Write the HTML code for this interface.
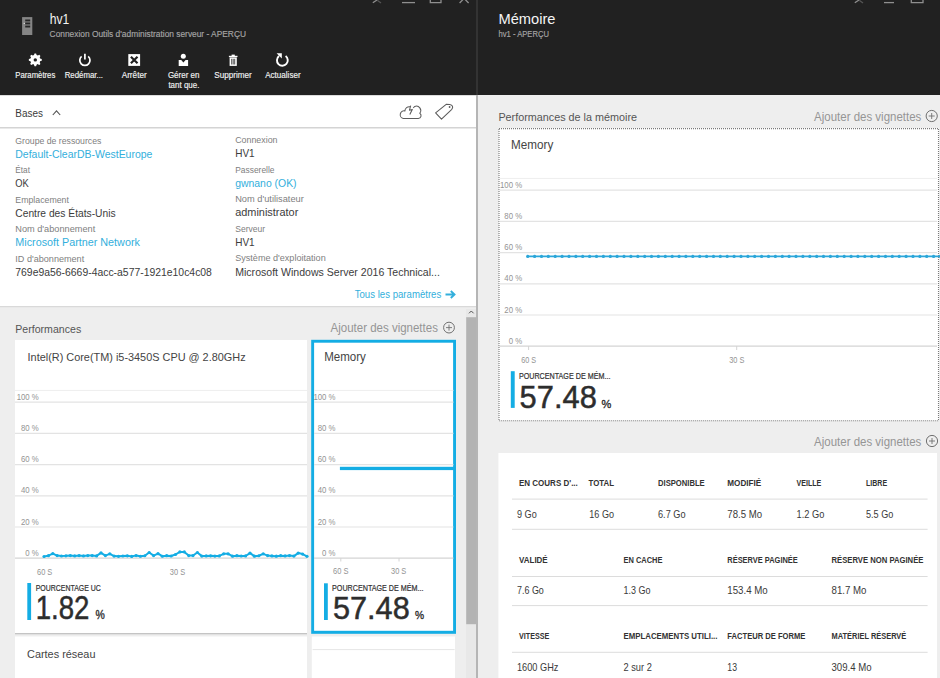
<!DOCTYPE html>
<html><head><meta charset="utf-8"><title>hv1 - Mémoire</title>
<style>html,body{margin:0;padding:0;width:940px;height:678px;overflow:hidden;background:#eeeeee;font-family:"Liberation Sans",sans-serif;}svg{display:block}</style>
</head><body><svg width="940" height="678" viewBox="0 0 940 678" font-family="Liberation Sans, sans-serif"><rect x="0" y="0" width="940" height="678" fill="#eeeeee" />
<rect x="0" y="0" width="940" height="95" fill="#212121" />
<rect x="0" y="95" width="476" height="212" fill="#ffffff" />
<rect x="0" y="95" width="476" height="1" fill="#dddddd" />
<line x1="0" y1="127.75" x2="476" y2="127.75" stroke="#d4d4d4" stroke-width="1.5" />
<line x1="0" y1="306.75" x2="476" y2="306.75" stroke="#d9d9d9" stroke-width="1.5" />
<rect x="0" y="307.5" width="476" height="370.5" fill="#eeeeee" />
<rect x="476" y="0" width="2" height="95" fill="#333333" />
<rect x="476" y="95" width="2" height="583" fill="#b5b5b5" />
<rect x="478" y="95" width="462" height="583" fill="#eeeeee" />
<g stroke="#8f8f8f" stroke-width="1.3" fill="none"><path d="M372.8 2.8 L377.8 -0.5"/><path d="M377.5 0.5 L381 3" stroke="#555"/><line x1="402" y1="2.6" x2="415" y2="2.6"/><path d="M430.3 -1 V2.6 H441 V-1"/><path d="M459.6 3 L463 -0.5 M468.6 3 L465.2 -0.5"/><path d="M854.8 2.8 L859.8 -0.5"/><path d="M859.5 0.5 L863 3" stroke="#555"/><line x1="884" y1="2.6" x2="894" y2="2.6"/><path d="M911.3 -1 V2.6 H923 V-1"/></g>
<g><rect x="22.1" y="17.1" width="10.2" height="17.9" fill="#858585"/><rect x="25.2" y="19.5" width="5" height="1.9" fill="#262626"/><rect x="25.2" y="22.5" width="5" height="1.9" fill="#262626"/><rect x="25.2" y="25.6" width="5" height="1.9" fill="#262626"/><circle cx="24.3" cy="23.4" r="0.7" fill="#dddddd"/></g>
<text x="49.70" y="24" font-size="14.5" fill="#f4f4f4" textLength="19.60" lengthAdjust="spacingAndGlyphs" >hv1</text>
<text x="49.60" y="36.9" font-size="8.3" fill="#a6a6a6" stroke="#a6a6a6" stroke-width="0.15" textLength="196.40" lengthAdjust="spacingAndGlyphs" >Connexion Outils d&#x27;administration serveur - APERÇU</text>
<text x="15.30" y="78.2" font-size="8.8" fill="#f2f2f2" stroke="#f2f2f2" stroke-width="0.15" textLength="40.00" lengthAdjust="spacingAndGlyphs" >Paramètres</text>
<text x="64.70" y="78.2" font-size="8.8" fill="#f2f2f2" stroke="#f2f2f2" stroke-width="0.15" textLength="38.30" lengthAdjust="spacingAndGlyphs" >Redémar...</text>
<text x="121.70" y="78.2" font-size="8.8" fill="#f2f2f2" stroke="#f2f2f2" stroke-width="0.15" textLength="25.00" lengthAdjust="spacingAndGlyphs" >Arrêter</text>
<text x="167.90" y="78.2" font-size="8.8" fill="#f2f2f2" stroke="#f2f2f2" stroke-width="0.15" textLength="31.50" lengthAdjust="spacingAndGlyphs" >Gérer en</text>
<text x="168.40" y="87.6" font-size="8.8" fill="#f2f2f2" stroke="#f2f2f2" stroke-width="0.15" textLength="31.00" lengthAdjust="spacingAndGlyphs" >tant que.</text>
<text x="214.30" y="78.2" font-size="8.8" fill="#f2f2f2" stroke="#f2f2f2" stroke-width="0.15" textLength="37.50" lengthAdjust="spacingAndGlyphs" >Supprimer</text>
<text x="265.20" y="78.2" font-size="8.8" fill="#f2f2f2" stroke="#f2f2f2" stroke-width="0.15" textLength="35.40" lengthAdjust="spacingAndGlyphs" >Actualiser</text>
<polygon points="34.51,53.45 36.09,53.45 36.95,55.93 39.30,54.78 40.42,55.90 39.27,58.25 41.75,59.11 41.75,60.69 39.27,61.55 40.42,63.90 39.30,65.02 36.95,63.87 36.09,66.35 34.51,66.35 33.65,63.87 31.30,65.02 30.18,63.90 31.33,61.55 28.85,60.69 28.85,59.11 31.33,58.25 30.18,55.90 31.30,54.78 33.65,55.93" fill="#fff"/><circle cx="35.3" cy="59.9" r="4.9" fill="#fff"/><circle cx="35.3" cy="59.9" r="1.7" fill="#212121"/>
<g fill="none" stroke="#fff" stroke-width="1.7"><path d="M81.6 56.4 A5.1 5.1 0 1 0 88.2 56.4"/><line x1="84.9" y1="53.8" x2="84.9" y2="59.6"/></g>
<rect x="128.3" y="54.1" width="11.8" height="11.8" fill="#fff"/><path d="M130.9 56.8 L137.5 63.2 M137.5 56.8 L130.9 63.2" stroke="#212121" stroke-width="2.2"/>
<circle cx="183.3" cy="56.2" r="2.5" fill="#fff"/><path d="M178.7 59.9 H181.2 L183.4 62.6 L185.6 59.9 H188.1 V65.9 H178.7 Z" fill="#fff"/>
<g fill="#fff"><rect x="228.9" y="55.8" width="8.6" height="1.3"/><rect x="231.6" y="54.6" width="3.2" height="1.4"/><rect x="229.6" y="57.4" width="7.2" height="8.5"/></g><g stroke="#262626" stroke-width="0.8"><line x1="231.7" y1="58.8" x2="231.7" y2="64.5"/><line x1="233.2" y1="58.8" x2="233.2" y2="64.5"/><line x1="234.7" y1="58.8" x2="234.7" y2="64.5"/></g>
<g fill="none" stroke="#fff" stroke-width="1.9"><path d="M279.0 56.1 A5.4 5.4 0 1 0 285.6 56.0"/></g><path d="M276.6 53.2 L281.8 53.2 L281.8 58.4 Z" fill="#fff"/>
<text x="498.50" y="24" font-size="14.5" fill="#f4f4f4" textLength="57.00" lengthAdjust="spacingAndGlyphs" >Mémoire</text>
<text x="498.50" y="36.9" font-size="8.3" fill="#a6a6a6" stroke="#a6a6a6" stroke-width="0.15" textLength="50.50" lengthAdjust="spacingAndGlyphs" >hv1 - APERÇU</text>
<text x="15.30" y="116.7" font-size="10" fill="#3b3b3b" textLength="27.60" lengthAdjust="spacingAndGlyphs" >Bases</text>
<path d="M52.8 115 L56.5 110.8 L60.2 115" fill="none" stroke="#555" stroke-width="1.1"/>
<g fill="none" stroke="#5c5c5c" stroke-width="1.05" stroke-linejoin="round"><path d="M410.2 106.8 A4.3 4.3 0 0 0 404.9 110.9 A3.8 3.8 0 0 0 403.3 118.5 H418.3 A2.9 2.9 0 0 0 419.8 113.2 A4.4 4.4 0 0 0 414.8 106.4 L413.2 108"/><path d="M410.7 105.7 L409.5 110.2 L412.3 109.4 L409.8 114.6"/><path d="M435.6 112.9 L441.5 119.2 L451.8 109.3 Q453.1 107.6 452.5 106.3 Q451.8 104.8 449.7 104.4 L446.2 104.3 Z"/></g><circle cx="449.6" cy="107" r="0.9" fill="#5c5c5c"/>
<text x="15.30" y="143.5" font-size="9.5" fill="#808080" textLength="86.10" lengthAdjust="spacingAndGlyphs" >Groupe de ressources</text>
<text x="15.30" y="172.9" font-size="9.5" fill="#808080" textLength="14.70" lengthAdjust="spacingAndGlyphs" >État</text>
<text x="15.30" y="202.8" font-size="9.5" fill="#808080" textLength="53.60" lengthAdjust="spacingAndGlyphs" >Emplacement</text>
<text x="15.30" y="232.1" font-size="9.5" fill="#808080" textLength="79.90" lengthAdjust="spacingAndGlyphs" >Nom d&#x27;abonnement</text>
<text x="15.30" y="261.5" font-size="9.5" fill="#808080" textLength="68.90" lengthAdjust="spacingAndGlyphs" >ID d&#x27;abonnement</text>
<text x="15.30" y="157.5" font-size="10.3" fill="#33afdc" textLength="137.10" lengthAdjust="spacingAndGlyphs" >Default-ClearDB-WestEurope</text>
<text x="15.30" y="186.9" font-size="10.3" fill="#3c3c3c" textLength="13.50" lengthAdjust="spacingAndGlyphs" >OK</text>
<text x="15.30" y="216.8" font-size="10.3" fill="#3c3c3c" textLength="100.30" lengthAdjust="spacingAndGlyphs" >Centre des États-Unis</text>
<text x="15.30" y="246.2" font-size="10.3" fill="#33afdc" textLength="124.58" lengthAdjust="spacingAndGlyphs" >Microsoft Partner Network</text>
<text x="15.30" y="275.5" font-size="10.3" fill="#3c3c3c" textLength="196.60" lengthAdjust="spacingAndGlyphs" >769e9a56-6669-4acc-a577-1921e10c4c08</text>
<text x="235.20" y="142.9" font-size="9.5" fill="#808080" textLength="42.30" lengthAdjust="spacingAndGlyphs" >Connexion</text>
<text x="235.20" y="172.5" font-size="9.5" fill="#808080" textLength="39.30" lengthAdjust="spacingAndGlyphs" >Passerelle</text>
<text x="235.20" y="202.4" font-size="9.5" fill="#808080" textLength="68.60" lengthAdjust="spacingAndGlyphs" >Nom d&#x27;utilisateur</text>
<text x="235.20" y="232" font-size="9.5" fill="#808080" textLength="29.90" lengthAdjust="spacingAndGlyphs" >Serveur</text>
<text x="235.20" y="261.4" font-size="9.5" fill="#808080" textLength="90.50" lengthAdjust="spacingAndGlyphs" >Système d&#x27;exploitation</text>
<text x="235.20" y="157.2" font-size="10.3" fill="#3c3c3c" textLength="19.40" lengthAdjust="spacingAndGlyphs" >HV1</text>
<text x="235.20" y="187.1" font-size="10.3" fill="#33afdc" textLength="61.40" lengthAdjust="spacingAndGlyphs" >gwnano (OK)</text>
<text x="235.20" y="216.3" font-size="10.3" fill="#3c3c3c" textLength="63.10" lengthAdjust="spacingAndGlyphs" >administrator</text>
<text x="235.20" y="245.9" font-size="10.3" fill="#3c3c3c" textLength="19.40" lengthAdjust="spacingAndGlyphs" >HV1</text>
<text x="235.20" y="275.8" font-size="10.3" fill="#3c3c3c" textLength="204.69" lengthAdjust="spacingAndGlyphs" >Microsoft Windows Server 2016 Technical...</text>
<text x="354.70" y="297.8" font-size="10.4" fill="#33afdc" textLength="86.60" lengthAdjust="spacingAndGlyphs" >Tous les paramètres</text>
<path d="M445.5 294.5 H454 M450.8 291 L454.5 294.5 L450.8 298" fill="none" stroke="#33afdc" stroke-width="1.9"/>
<text x="15.30" y="332.7" font-size="10.6" fill="#555555" textLength="65.90" lengthAdjust="spacingAndGlyphs" >Performances</text>
<text x="330.60" y="332" font-size="12" fill="#959595" textLength="107.30" lengthAdjust="spacingAndGlyphs" >Ajouter des vignettes</text>
<circle cx="449" cy="327.6" r="5.4" fill="none" stroke="#707070" stroke-width="1"/><path d="M449 324.6 V330.6 M446 327.6 H452" stroke="#707070" stroke-width="0.9"/>
<rect x="466" y="309" width="10" height="369" fill="#e8e8e8" />
<rect x="466.2" y="317.2" width="9.8" height="307" fill="#b3b3b3" />
<path d="M469 313.3 L471.3 311 L473.6 313.3" fill="none" stroke="#555" stroke-width="1"/>
<rect x="15" y="340" width="292" height="293" fill="#ffffff" />
<text x="27.60" y="361.3" font-size="10.9" fill="#444444" textLength="218.00" lengthAdjust="spacingAndGlyphs" >Intel(R) Core(TM) i5-3450S CPU @ 2.80GHz</text>
<line x1="15" y1="390.4" x2="307" y2="390.4" stroke="#eeeeee" stroke-width="1" />
<line x1="15" y1="402.2" x2="307" y2="402.2" stroke="#e3e3e3" stroke-width="1.2" />
<text x="16.69" y="399.7" font-size="9" fill="#939393" textLength="22.12" lengthAdjust="spacingAndGlyphs" >100 %</text>
<line x1="15" y1="433.4" x2="307" y2="433.4" stroke="#e3e3e3" stroke-width="1.2" />
<text x="21.02" y="430.9" font-size="9" fill="#939393" textLength="17.78" lengthAdjust="spacingAndGlyphs" >80 %</text>
<line x1="15" y1="464.59999999999997" x2="307" y2="464.59999999999997" stroke="#e3e3e3" stroke-width="1.2" />
<text x="21.02" y="462.09999999999997" font-size="9" fill="#939393" textLength="17.78" lengthAdjust="spacingAndGlyphs" >60 %</text>
<line x1="15" y1="495.79999999999995" x2="307" y2="495.79999999999995" stroke="#e3e3e3" stroke-width="1.2" />
<text x="21.02" y="493.29999999999995" font-size="9" fill="#939393" textLength="17.78" lengthAdjust="spacingAndGlyphs" >40 %</text>
<line x1="15" y1="527.0" x2="307" y2="527.0" stroke="#e3e3e3" stroke-width="1.2" />
<text x="21.02" y="524.5" font-size="9" fill="#939393" textLength="17.78" lengthAdjust="spacingAndGlyphs" >20 %</text>
<line x1="15" y1="558.2" x2="307" y2="558.2" stroke="#d4d4d4" stroke-width="1.2" />
<text x="25.36" y="555.7" font-size="9" fill="#939393" textLength="13.44" lengthAdjust="spacingAndGlyphs" >0 %</text>
<polyline points="44.0,556.5 48.4,555.64 52.8,553.6 57.1,555.57 61.5,555.98 65.9,555.83 70.3,555.55 74.7,555.96 79.1,555.53 83.5,555.89 87.8,555.56 92.2,555.58 96.6,555.88 101.0,552.9 105.4,555.61 109.8,553.8 114.1,556.06 118.5,556.35 122.9,556.02 127.3,555.86 131.7,556.38 136.1,555.54 140.4,556.27 144.8,555.76 149.2,552.5 153.6,555.61 158.0,553.7 162.3,556.23 166.7,555.66 171.1,556.02 175.5,554.5 179.9,551.9 184.3,551.9 188.7,555.56 193.0,555.55 197.4,552.5 201.8,556.11 206.2,555.88 210.6,555.78 214.9,556.03 219.3,555.91 223.7,553.8 228.1,553.8 232.5,556.13 236.9,555.72 241.2,556.02 245.6,555.97 250.0,553.1 254.4,556.16 258.8,555.76 263.2,553.8 267.6,555.61 271.9,555.88 276.3,556.18 280.7,555.64 285.1,555.94 289.5,555.54 293.9,556.1 298.2,553.1 302.6,554.1 307.0,556.29" fill="none" stroke="#14ade4" stroke-width="2" stroke-linejoin="round"/>
<g fill="#14ade4"><circle cx="44.0" cy="556.5" r="1.6"/><circle cx="48.4" cy="555.64" r="1.6"/><circle cx="52.8" cy="553.6" r="1.6"/><circle cx="57.1" cy="555.57" r="1.6"/><circle cx="61.5" cy="555.98" r="1.6"/><circle cx="65.9" cy="555.83" r="1.6"/><circle cx="70.3" cy="555.55" r="1.6"/><circle cx="74.7" cy="555.96" r="1.6"/><circle cx="79.1" cy="555.53" r="1.6"/><circle cx="83.5" cy="555.89" r="1.6"/><circle cx="87.8" cy="555.56" r="1.6"/><circle cx="92.2" cy="555.58" r="1.6"/><circle cx="96.6" cy="555.88" r="1.6"/><circle cx="101.0" cy="552.9" r="1.6"/><circle cx="105.4" cy="555.61" r="1.6"/><circle cx="109.8" cy="553.8" r="1.6"/><circle cx="114.1" cy="556.06" r="1.6"/><circle cx="118.5" cy="556.35" r="1.6"/><circle cx="122.9" cy="556.02" r="1.6"/><circle cx="127.3" cy="555.86" r="1.6"/><circle cx="131.7" cy="556.38" r="1.6"/><circle cx="136.1" cy="555.54" r="1.6"/><circle cx="140.4" cy="556.27" r="1.6"/><circle cx="144.8" cy="555.76" r="1.6"/><circle cx="149.2" cy="552.5" r="1.6"/><circle cx="153.6" cy="555.61" r="1.6"/><circle cx="158.0" cy="553.7" r="1.6"/><circle cx="162.3" cy="556.23" r="1.6"/><circle cx="166.7" cy="555.66" r="1.6"/><circle cx="171.1" cy="556.02" r="1.6"/><circle cx="175.5" cy="554.5" r="1.6"/><circle cx="179.9" cy="551.9" r="1.6"/><circle cx="184.3" cy="551.9" r="1.6"/><circle cx="188.7" cy="555.56" r="1.6"/><circle cx="193.0" cy="555.55" r="1.6"/><circle cx="197.4" cy="552.5" r="1.6"/><circle cx="201.8" cy="556.11" r="1.6"/><circle cx="206.2" cy="555.88" r="1.6"/><circle cx="210.6" cy="555.78" r="1.6"/><circle cx="214.9" cy="556.03" r="1.6"/><circle cx="219.3" cy="555.91" r="1.6"/><circle cx="223.7" cy="553.8" r="1.6"/><circle cx="228.1" cy="553.8" r="1.6"/><circle cx="232.5" cy="556.13" r="1.6"/><circle cx="236.9" cy="555.72" r="1.6"/><circle cx="241.2" cy="556.02" r="1.6"/><circle cx="245.6" cy="555.97" r="1.6"/><circle cx="250.0" cy="553.1" r="1.6"/><circle cx="254.4" cy="556.16" r="1.6"/><circle cx="258.8" cy="555.76" r="1.6"/><circle cx="263.2" cy="553.8" r="1.6"/><circle cx="267.6" cy="555.61" r="1.6"/><circle cx="271.9" cy="555.88" r="1.6"/><circle cx="276.3" cy="556.18" r="1.6"/><circle cx="280.7" cy="555.64" r="1.6"/><circle cx="285.1" cy="555.94" r="1.6"/><circle cx="289.5" cy="555.54" r="1.6"/><circle cx="293.9" cy="556.1" r="1.6"/><circle cx="298.2" cy="553.1" r="1.6"/><circle cx="302.6" cy="554.1" r="1.6"/><circle cx="307.0" cy="556.29" r="1.6"/></g>
<text x="37.00" y="574.8" font-size="8.6" fill="#939393" textLength="15.30" lengthAdjust="spacingAndGlyphs" >60 S</text>
<text x="169.80" y="574.8" font-size="8.6" fill="#939393" textLength="15.30" lengthAdjust="spacingAndGlyphs" >30 S</text>
<rect x="27.3" y="583" width="3.8" height="37" fill="#14ade4" />
<text x="35.70" y="590.6" font-size="8.2" fill="#333333" stroke="#333333" stroke-width="0.2" textLength="65.10" lengthAdjust="spacingAndGlyphs" >POURCENTAGE UC</text>
<text x="35.70" y="619.3" font-size="33.5" fill="#2d2d2d" stroke="#2d2d2d" stroke-width="0.5" textLength="53.71" lengthAdjust="spacingAndGlyphs" >1.82</text>
<text x="95.40" y="619.3" font-size="12" fill="#2d2d2d" stroke="#2d2d2d" stroke-width="0.35" textLength="9.30" lengthAdjust="spacingAndGlyphs" >%</text>
<rect x="311.2" y="339.8" width="144.8" height="294" fill="#14ade4" />
<rect x="314.1" y="342.7" width="139" height="288.1" fill="#ffffff" />
<line x1="314" y1="390.4" x2="453.4" y2="390.4" stroke="#eeeeee" stroke-width="1" />
<line x1="314" y1="402.2" x2="453.4" y2="402.2" stroke="#e3e3e3" stroke-width="1.2" />
<text x="313.39" y="399.7" font-size="9" fill="#939393" textLength="22.12" lengthAdjust="spacingAndGlyphs" >100 %</text>
<line x1="314" y1="433.4" x2="453.4" y2="433.4" stroke="#e3e3e3" stroke-width="1.2" />
<text x="317.72" y="430.9" font-size="9" fill="#939393" textLength="17.78" lengthAdjust="spacingAndGlyphs" >80 %</text>
<line x1="314" y1="464.59999999999997" x2="453.4" y2="464.59999999999997" stroke="#e3e3e3" stroke-width="1.2" />
<text x="317.72" y="462.09999999999997" font-size="9" fill="#939393" textLength="17.78" lengthAdjust="spacingAndGlyphs" >60 %</text>
<line x1="314" y1="495.79999999999995" x2="453.4" y2="495.79999999999995" stroke="#e3e3e3" stroke-width="1.2" />
<text x="317.72" y="493.29999999999995" font-size="9" fill="#939393" textLength="17.78" lengthAdjust="spacingAndGlyphs" >40 %</text>
<line x1="314" y1="527.0" x2="453.4" y2="527.0" stroke="#e3e3e3" stroke-width="1.2" />
<text x="317.72" y="524.5" font-size="9" fill="#939393" textLength="17.78" lengthAdjust="spacingAndGlyphs" >20 %</text>
<line x1="314" y1="558.2" x2="453.4" y2="558.2" stroke="#d4d4d4" stroke-width="1.2" />
<text x="322.06" y="555.7" font-size="9" fill="#939393" textLength="13.44" lengthAdjust="spacingAndGlyphs" >0 %</text>
<rect x="339.9" y="466.8" width="114" height="3.3" fill="#14ade4" />
<text x="324.20" y="361.3" font-size="12" fill="#444444" textLength="41.70" lengthAdjust="spacingAndGlyphs" >Memory</text>
<text x="333.00" y="574" font-size="8.6" fill="#939393" textLength="15.50" lengthAdjust="spacingAndGlyphs" >60 S</text>
<text x="391.00" y="574" font-size="8.6" fill="#939393" textLength="15.30" lengthAdjust="spacingAndGlyphs" >30 S</text>
<line x1="340.8" y1="558" x2="340.8" y2="561.5" stroke="#d4d4d4" stroke-width="1" />
<line x1="399" y1="558" x2="399" y2="561.5" stroke="#d4d4d4" stroke-width="1" />
<rect x="324" y="583.3" width="3.8" height="36.7" fill="#14ade4" />
<text x="332.10" y="590.5" font-size="8.2" fill="#333333" stroke="#333333" stroke-width="0.2" textLength="91.40" lengthAdjust="spacingAndGlyphs" >POURCENTAGE DE MÉM...</text>
<text x="333.00" y="619" font-size="31" fill="#2d2d2d" stroke="#2d2d2d" stroke-width="0.5" textLength="76.71" lengthAdjust="spacingAndGlyphs" >57.48</text>
<text x="414.90" y="619" font-size="11.5" fill="#2d2d2d" stroke="#2d2d2d" stroke-width="0.35" textLength="9.10" lengthAdjust="spacingAndGlyphs" >%</text>
<rect x="15" y="633" width="292" height="1.3" fill="#c4c4c4" />
<rect x="15" y="636.5" width="292" height="41.5" fill="#ffffff" />
<text x="27.00" y="658.3" font-size="10.9" fill="#444444" textLength="68.50" lengthAdjust="spacingAndGlyphs" >Cartes réseau</text>
<rect x="311.8" y="636.5" width="143.2" height="41.5" fill="#ffffff" />
<line x1="312.6" y1="649.6" x2="454.6" y2="649.6" stroke="#e6e6e6" stroke-width="1" />
<text x="498.40" y="120.5" font-size="10.8" fill="#555555" textLength="138.61" lengthAdjust="spacingAndGlyphs" >Performances de la mémoire</text>
<text x="814.10" y="120.5" font-size="12" fill="#959595" textLength="107.20" lengthAdjust="spacingAndGlyphs" >Ajouter des vignettes</text>
<circle cx="931.7" cy="116" r="5.6" fill="none" stroke="#707070" stroke-width="1"/><path d="M931.7 113 V119 M928.7 116 H934.7" stroke="#707070" stroke-width="0.9"/>
<rect x="499" y="128.2" width="440" height="292.6" fill="#ffffff" />
<rect x="499" y="128.6" width="439.5" height="292.2" fill="none" stroke="#7a7a7a" stroke-width="1.1" stroke-dasharray="1,1"/>
<text x="511.10" y="149.1" font-size="12" fill="#444444" textLength="42.20" lengthAdjust="spacingAndGlyphs" >Memory</text>
<line x1="499.5" y1="178.39999999999998" x2="937" y2="178.39999999999998" stroke="#eeeeee" stroke-width="1" />
<line x1="499.5" y1="190.2" x2="937" y2="190.2" stroke="#e3e3e3" stroke-width="1.2" />
<text x="499.99" y="187.7" font-size="9" fill="#939393" textLength="22.12" lengthAdjust="spacingAndGlyphs" >100 %</text>
<line x1="499.5" y1="221.39999999999998" x2="937" y2="221.39999999999998" stroke="#e3e3e3" stroke-width="1.2" />
<text x="504.32" y="218.89999999999998" font-size="9" fill="#939393" textLength="17.78" lengthAdjust="spacingAndGlyphs" >80 %</text>
<line x1="499.5" y1="252.6" x2="937" y2="252.6" stroke="#e3e3e3" stroke-width="1.2" />
<text x="504.32" y="250.1" font-size="9" fill="#939393" textLength="17.78" lengthAdjust="spacingAndGlyphs" >60 %</text>
<line x1="499.5" y1="283.79999999999995" x2="937" y2="283.79999999999995" stroke="#e3e3e3" stroke-width="1.2" />
<text x="504.32" y="281.29999999999995" font-size="9" fill="#939393" textLength="17.78" lengthAdjust="spacingAndGlyphs" >40 %</text>
<line x1="499.5" y1="315.0" x2="937" y2="315.0" stroke="#e3e3e3" stroke-width="1.2" />
<text x="504.32" y="312.5" font-size="9" fill="#939393" textLength="17.78" lengthAdjust="spacingAndGlyphs" >20 %</text>
<line x1="499.5" y1="346.2" x2="937" y2="346.2" stroke="#d4d4d4" stroke-width="1.2" />
<text x="508.66" y="343.7" font-size="9" fill="#939393" textLength="13.44" lengthAdjust="spacingAndGlyphs" >0 %</text>
<text x="521.20" y="363.1" font-size="8.6" fill="#939393" textLength="14.90" lengthAdjust="spacingAndGlyphs" >60 S</text>
<text x="729.20" y="363.1" font-size="8.6" fill="#939393" textLength="15.20" lengthAdjust="spacingAndGlyphs" >30 S</text>
<line x1="528.6" y1="346" x2="528.6" y2="350" stroke="#d4d4d4" stroke-width="1" />
<line x1="736.7" y1="346" x2="736.7" y2="350" stroke="#d4d4d4" stroke-width="1" />
<line x1="527.7" y1="256.4" x2="940" y2="256.4" stroke="#2aa6d9" stroke-width="1.6"/>
<g fill="#2aa6d9"><circle cx="527.7" cy="256.4" r="1.6"/><circle cx="534.6" cy="256.4" r="1.6"/><circle cx="541.5" cy="256.4" r="1.6"/><circle cx="548.3" cy="256.4" r="1.6"/><circle cx="555.2" cy="256.4" r="1.6"/><circle cx="562.1" cy="256.4" r="1.6"/><circle cx="569.0" cy="256.4" r="1.6"/><circle cx="575.9" cy="256.4" r="1.6"/><circle cx="582.7" cy="256.4" r="1.6"/><circle cx="589.6" cy="256.4" r="1.6"/><circle cx="596.5" cy="256.4" r="1.6"/><circle cx="603.4" cy="256.4" r="1.6"/><circle cx="610.3" cy="256.4" r="1.6"/><circle cx="617.1" cy="256.4" r="1.6"/><circle cx="624.0" cy="256.4" r="1.6"/><circle cx="630.9" cy="256.4" r="1.6"/><circle cx="637.8" cy="256.4" r="1.6"/><circle cx="644.7" cy="256.4" r="1.6"/><circle cx="651.5" cy="256.4" r="1.6"/><circle cx="658.4" cy="256.4" r="1.6"/><circle cx="665.3" cy="256.4" r="1.6"/><circle cx="672.2" cy="256.4" r="1.6"/><circle cx="679.1" cy="256.4" r="1.6"/><circle cx="685.9" cy="256.4" r="1.6"/><circle cx="692.8" cy="256.4" r="1.6"/><circle cx="699.7" cy="256.4" r="1.6"/><circle cx="706.6" cy="256.4" r="1.6"/><circle cx="713.5" cy="256.4" r="1.6"/><circle cx="720.3" cy="256.4" r="1.6"/><circle cx="727.2" cy="256.4" r="1.6"/><circle cx="734.1" cy="256.4" r="1.6"/><circle cx="741.0" cy="256.4" r="1.6"/><circle cx="747.9" cy="256.4" r="1.6"/><circle cx="754.7" cy="256.4" r="1.6"/><circle cx="761.6" cy="256.4" r="1.6"/><circle cx="768.5" cy="256.4" r="1.6"/><circle cx="775.4" cy="256.4" r="1.6"/><circle cx="782.3" cy="256.4" r="1.6"/><circle cx="789.1" cy="256.4" r="1.6"/><circle cx="796.0" cy="256.4" r="1.6"/><circle cx="802.9" cy="256.4" r="1.6"/><circle cx="809.8" cy="256.4" r="1.6"/><circle cx="816.7" cy="256.4" r="1.6"/><circle cx="823.5" cy="256.4" r="1.6"/><circle cx="830.4" cy="256.4" r="1.6"/><circle cx="837.3" cy="256.4" r="1.6"/><circle cx="844.2" cy="256.4" r="1.6"/><circle cx="851.1" cy="256.4" r="1.6"/><circle cx="857.9" cy="256.4" r="1.6"/><circle cx="864.8" cy="256.4" r="1.6"/><circle cx="871.7" cy="256.4" r="1.6"/><circle cx="878.6" cy="256.4" r="1.6"/><circle cx="885.5" cy="256.4" r="1.6"/><circle cx="892.3" cy="256.4" r="1.6"/><circle cx="899.2" cy="256.4" r="1.6"/><circle cx="906.1" cy="256.4" r="1.6"/><circle cx="913.0" cy="256.4" r="1.6"/><circle cx="919.9" cy="256.4" r="1.6"/><circle cx="926.7" cy="256.4" r="1.6"/><circle cx="933.6" cy="256.4" r="1.6"/><circle cx="940.5" cy="256.4" r="1.6"/></g>
<rect x="510.8" y="371.2" width="3.9" height="36.7" fill="#14ade4" />
<text x="518.90" y="378.7" font-size="8.2" fill="#333333" stroke="#333333" stroke-width="0.2" textLength="91.50" lengthAdjust="spacingAndGlyphs" >POURCENTAGE DE MÉM...</text>
<text x="519.60" y="407.6" font-size="32" fill="#2d2d2d" stroke="#2d2d2d" stroke-width="0.5" textLength="77.21" lengthAdjust="spacingAndGlyphs" >57.48</text>
<text x="601.60" y="407.6" font-size="11.5" fill="#2d2d2d" stroke="#2d2d2d" stroke-width="0.35" textLength="9.80" lengthAdjust="spacingAndGlyphs" >%</text>
<text x="814.10" y="445.5" font-size="12" fill="#959595" textLength="107.20" lengthAdjust="spacingAndGlyphs" >Ajouter des vignettes</text>
<circle cx="932" cy="441" r="5.6" fill="none" stroke="#707070" stroke-width="1"/><path d="M932 438 V444 M929 441 H935" stroke="#707070" stroke-width="0.9"/>
<rect x="498.4" y="453" width="438.6" height="225" fill="#ffffff" />
<text x="519.00" y="485.9" font-size="8.9" fill="#333333" font-weight="bold" textLength="58.80" lengthAdjust="spacingAndGlyphs" >EN COURS D&#x27;...</text>
<text x="588.50" y="485.9" font-size="8.9" fill="#333333" font-weight="bold" textLength="25.50" lengthAdjust="spacingAndGlyphs" >TOTAL</text>
<text x="658.00" y="485.9" font-size="8.9" fill="#333333" font-weight="bold" textLength="46.70" lengthAdjust="spacingAndGlyphs" >DISPONIBLE</text>
<text x="727.30" y="485.9" font-size="8.9" fill="#333333" font-weight="bold" textLength="34.00" lengthAdjust="spacingAndGlyphs" >MODIFIÉ</text>
<text x="796.50" y="485.9" font-size="8.9" fill="#333333" font-weight="bold" textLength="24.80" lengthAdjust="spacingAndGlyphs" >VEILLE</text>
<text x="866.00" y="485.9" font-size="8.9" fill="#333333" font-weight="bold" textLength="21.10" lengthAdjust="spacingAndGlyphs" >LIBRE</text>
<line x1="512" y1="499.1" x2="927.6" y2="499.1" stroke="#dcdcdc" stroke-width="1" />
<text x="517.00" y="517.8" font-size="10.6" fill="#3a3a3a" textLength="19.70" lengthAdjust="spacingAndGlyphs" >9 Go</text>
<text x="589.30" y="517.8" font-size="10.6" fill="#3a3a3a" textLength="24.70" lengthAdjust="spacingAndGlyphs" >16 Go</text>
<text x="658.00" y="517.8" font-size="10.6" fill="#3a3a3a" textLength="27.50" lengthAdjust="spacingAndGlyphs" >6.7 Go</text>
<text x="727.30" y="517.8" font-size="10.6" fill="#3a3a3a" textLength="34.70" lengthAdjust="spacingAndGlyphs" >78.5 Mo</text>
<text x="796.50" y="517.8" font-size="10.6" fill="#3a3a3a" textLength="27.80" lengthAdjust="spacingAndGlyphs" >1.2 Go</text>
<text x="866.00" y="517.8" font-size="10.6" fill="#3a3a3a" textLength="27.30" lengthAdjust="spacingAndGlyphs" >5.5 Go</text>
<line x1="512" y1="529.3" x2="927.6" y2="529.3" stroke="#dcdcdc" stroke-width="1" />
<text x="519.00" y="562.5" font-size="8.9" fill="#333333" font-weight="bold" textLength="28.70" lengthAdjust="spacingAndGlyphs" >VALIDÉ</text>
<text x="623.50" y="562.5" font-size="8.9" fill="#333333" font-weight="bold" textLength="39.00" lengthAdjust="spacingAndGlyphs" >EN CACHE</text>
<text x="727.30" y="562.5" font-size="8.9" fill="#333333" font-weight="bold" textLength="70.50" lengthAdjust="spacingAndGlyphs" >RÉSERVE PAGINÉE</text>
<text x="831.50" y="562.5" font-size="8.9" fill="#333333" font-weight="bold" textLength="91.90" lengthAdjust="spacingAndGlyphs" >RÉSERVE NON PAGINÉE</text>
<line x1="512" y1="576.5" x2="927.6" y2="576.5" stroke="#dcdcdc" stroke-width="1" />
<text x="517.00" y="594.4" font-size="10.6" fill="#3a3a3a" textLength="26.80" lengthAdjust="spacingAndGlyphs" >7.6 Go</text>
<text x="623.50" y="594.4" font-size="10.6" fill="#3a3a3a" textLength="27.00" lengthAdjust="spacingAndGlyphs" >1.3 Go</text>
<text x="727.30" y="594.4" font-size="10.6" fill="#3a3a3a" textLength="40.40" lengthAdjust="spacingAndGlyphs" >153.4 Mo</text>
<text x="831.50" y="594.4" font-size="10.6" fill="#3a3a3a" textLength="35.00" lengthAdjust="spacingAndGlyphs" >81.7 Mo</text>
<line x1="512" y1="605.6" x2="927.6" y2="605.6" stroke="#dcdcdc" stroke-width="1" />
<text x="519.00" y="639" font-size="8.9" fill="#333333" font-weight="bold" textLength="30.40" lengthAdjust="spacingAndGlyphs" >VITESSE</text>
<text x="623.50" y="639" font-size="8.9" fill="#333333" font-weight="bold" textLength="93.90" lengthAdjust="spacingAndGlyphs" >EMPLACEMENTS UTILI...</text>
<text x="727.30" y="639" font-size="8.9" fill="#333333" font-weight="bold" textLength="78.10" lengthAdjust="spacingAndGlyphs" >FACTEUR DE FORME</text>
<text x="831.50" y="639" font-size="8.9" fill="#333333" font-weight="bold" textLength="74.80" lengthAdjust="spacingAndGlyphs" >MATÉRIEL RÉSERVÉ</text>
<line x1="512" y1="652.3" x2="927.6" y2="652.3" stroke="#dcdcdc" stroke-width="1" />
<text x="517.00" y="670.7" font-size="10.6" fill="#3a3a3a" textLength="41.40" lengthAdjust="spacingAndGlyphs" >1600 GHz</text>
<text x="623.50" y="670.7" font-size="10.6" fill="#3a3a3a" textLength="28.30" lengthAdjust="spacingAndGlyphs" >2 sur 2</text>
<text x="727.30" y="670.7" font-size="10.6" fill="#3a3a3a" textLength="9.70" lengthAdjust="spacingAndGlyphs" >13</text>
<text x="831.50" y="670.7" font-size="10.6" fill="#3a3a3a" textLength="40.10" lengthAdjust="spacingAndGlyphs" >309.4 Mo</text></svg></body></html>
